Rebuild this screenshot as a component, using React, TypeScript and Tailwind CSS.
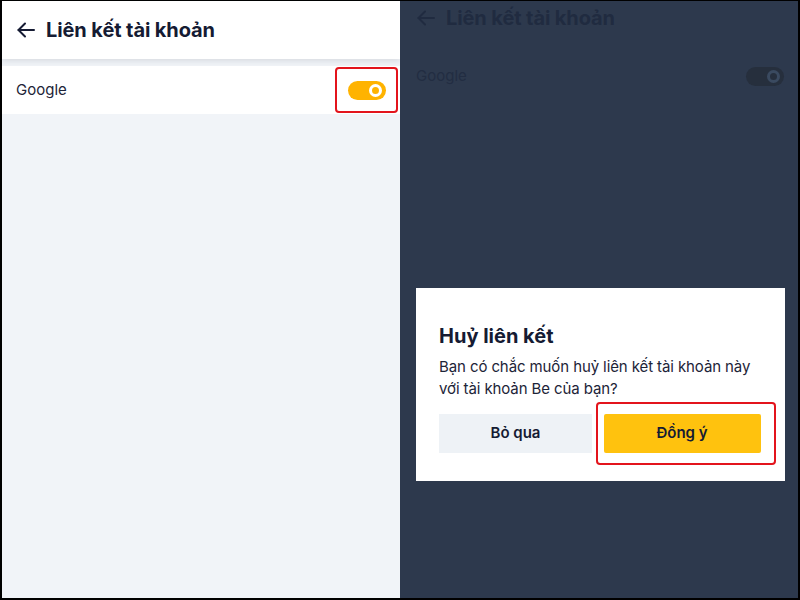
import React from "react";

const font = { fontFamily: "Inter, 'Noto Sans', 'Liberation Sans', sans-serif" };

function BackArrow({ className }: { className?: string }) {
  return (
    <svg viewBox="0 0 20 20" className={className} fill="none" stroke="currentColor" strokeWidth={2} strokeLinecap="round" strokeLinejoin="round">
      <path d="M18 10H2.5" />
      <path d="M9 3.5L2.5 10L9 16.5" />
    </svg>
  );
}

function Toggle({ dim }: { dim?: boolean }) {
  return (
    <div className={`relative h-[19px] w-[38px] rounded-full ${dim ? "bg-[#262f3d]" : "bg-[#ffb300]"}`}>
      <div className={`absolute right-[4px] top-[3px] h-[13px] w-[13px] rounded-full border-[3px] ${dim ? "border-[#3a4a60] bg-[#262f3d]" : "border-white bg-[#ffb300]"}`} />
    </div>
  );
}

export default function App() {
  return (
    <div style={font} className="flex h-[600px] w-[800px] border-x-2 border-b-2 border-t border-black">
      {/* Account linking screen */}
      <div className="flex w-[398px] flex-col bg-[#f1f4f8]">
        <div className="flex h-[58px] items-center gap-[10px] bg-white pl-[14px] shadow-[0_2px_6px_rgba(30,40,60,0.12)]">
          <BackArrow className="h-[20px] w-[20px] text-[#151b33]" />
          <span className="text-[20px] font-bold tracking-[-0.1px] text-[#151b33]">Liên kết tài khoản</span>
        </div>
        <div className="mt-[7px] flex h-[48px] items-center justify-between bg-white pl-[14px] pr-[2px]">
          <span className="text-[15px] text-[#1d2438]">Google</span>
          <div className="relative flex h-[46px] w-[63px] items-center justify-center rounded-[4px] border-[2.5px] border-[#e3141c]">
            <Toggle />
          </div>
        </div>
      </div>

      {/* Same screen behind the confirm dialog */}
      <div className="relative flex-1 bg-[#2d394d]">
        <div className="flex h-[34px] items-center gap-[10px] pl-[16px]">
          <BackArrow className="h-[20px] w-[20px] text-[#202b40]" />
          <span className="text-[20px] font-bold tracking-[-0.1px] text-[#202b40]">Liên kết tài khoản</span>
        </div>
        <div className="mt-[22px] flex h-[38px] items-center justify-between pl-[16px] pr-[14px]">
          <span className="text-[15px] text-[#222d42]">Google</span>
          <Toggle dim />
        </div>

        <div className="absolute left-[16px] top-[287px] h-[193px] w-[369px] bg-white px-[23px] pt-[34px]">
          <div className="text-[20px] font-bold leading-[28px] text-[#151b33]">Huỷ liên kết</div>
          <p className="mt-[6px] -mr-[10px] text-[15px] leading-[22px] tracking-[-0.1px] text-[#1d2438]">
            Bạn có chắc muốn huỷ liên kết tài khoản này với tài khoản Be của bạn?
          </p>
          <div className="mt-[14px] flex">
            <button className="h-[39px] w-[153px] shrink-0 bg-[#eef2f6] text-[15px] font-semibold text-[#151b33]">Bỏ qua</button>
            <div className="relative -my-[12px] ml-[4px] flex h-[63px] w-[180px] shrink-0 items-center rounded-[4px] border-[2.5px] border-[#e3141c] pl-[5.5px]">
              <button className="h-[39px] w-[157px] shrink-0 rounded-[2px] bg-[#ffc20e] text-[15px] font-semibold text-[#151b33]">Đồng ý</button>
            </div>
          </div>
        </div>
      </div>
    </div>
  );
}
